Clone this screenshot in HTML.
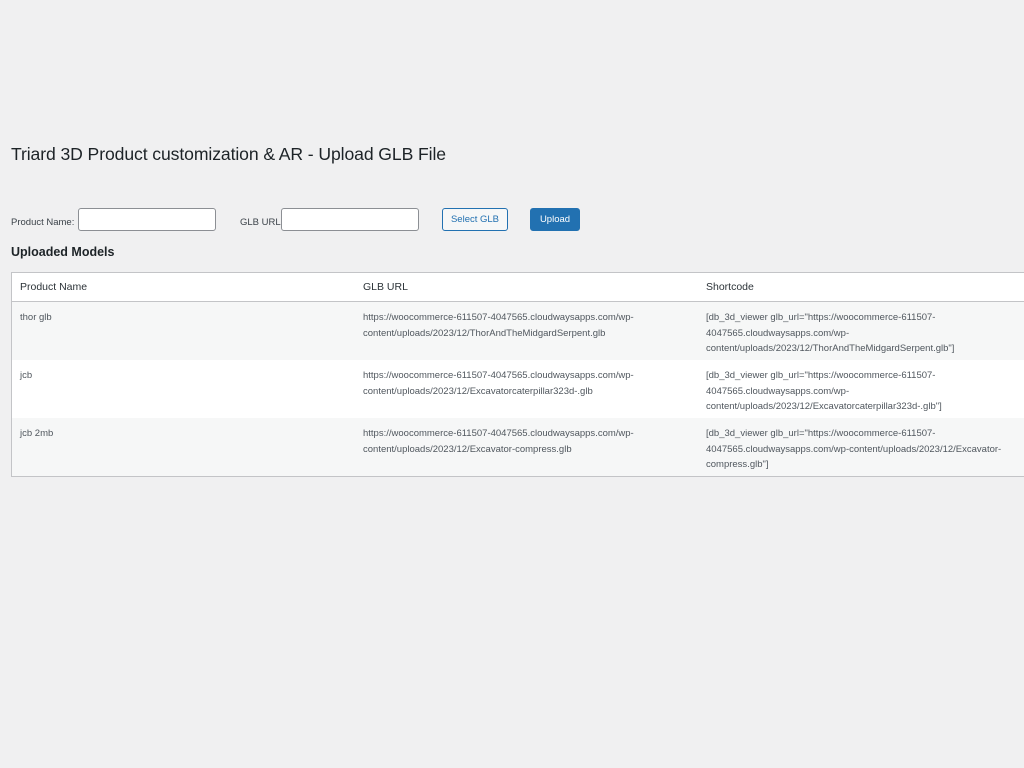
<!DOCTYPE html>
<html><head><style>
body{margin:0;width:1024px;height:768px;background:#f0f0f1;font-family:"Liberation Sans",sans-serif;color:#3c434a;position:relative;overflow:hidden}
.a{position:absolute;white-space:nowrap}
h1{position:absolute;left:11px;top:144px;margin:0;font-weight:400;font-size:17.6px;color:#1d2327;letter-spacing:-0.1px}
.lbl{font-size:9.5px;color:#3c434a}
.in{position:absolute;height:23px;background:#fff;border:1px solid #8c8f94;border-radius:3px;box-sizing:border-box}
.btn{position:absolute;height:23px;border-radius:3px;box-sizing:border-box;font-size:9.5px;text-align:center;line-height:21px}
table{position:absolute;left:11px;top:272px;width:1030px;border-collapse:collapse;border:1px solid #c3c4c7;background:#fff;font-size:9.5px;color:#50575e}
th{text-align:left;font-weight:400;font-size:10.5px;color:#2c3338;height:28px;padding:0 8px;border-bottom:1px solid #c3c4c7}
td{vertical-align:top;padding:8px 8px 0;height:50px;line-height:15.5px}
tr.alt td{background:#f6f7f7}
</style></head><body>
<h1>Triard 3D Product customization &amp; AR - Upload GLB File</h1>
<div class="a lbl" style="left:11px;top:217px">Product Name:</div>
<div class="in" style="left:78px;top:208px;width:138px"></div>
<div class="a lbl" style="left:240px;top:217px">GLB URL:</div>
<div class="in" style="left:281px;top:208px;width:138px"></div>
<div class="btn" style="left:442px;top:208px;width:66px;border:1px solid #2271b1;color:#2271b1;background:#f6f7f7">Select GLB</div>
<div class="btn" style="left:530px;top:208px;width:50px;background:#2271b1;color:#fff;border:1px solid #2271b1">Upload</div>
<div class="a" style="left:11px;top:245px;font-size:12.5px;font-weight:700;color:#1d2327">Uploaded Models</div>
<table>
<tr><th style="width:327px">Product Name</th><th style="width:327px">GLB URL</th><th>Shortcode</th></tr>
<tr class="alt"><td>thor glb</td><td>https://woocommerce-611507-4047565.cloudwaysapps.com/wp-<br>content/uploads/2023/12/ThorAndTheMidgardSerpent.glb</td><td>[db_3d_viewer glb_url="https://woocommerce-611507-<br>4047565.cloudwaysapps.com/wp-<br>content/uploads/2023/12/ThorAndTheMidgardSerpent.glb"]</td></tr>
<tr><td>jcb</td><td>https://woocommerce-611507-4047565.cloudwaysapps.com/wp-<br>content/uploads/2023/12/Excavatorcaterpillar323d-.glb</td><td>[db_3d_viewer glb_url="https://woocommerce-611507-<br>4047565.cloudwaysapps.com/wp-<br>content/uploads/2023/12/Excavatorcaterpillar323d-.glb"]</td></tr>
<tr class="alt"><td>jcb 2mb</td><td>https://woocommerce-611507-4047565.cloudwaysapps.com/wp-<br>content/uploads/2023/12/Excavator-compress.glb</td><td>[db_3d_viewer glb_url="https://woocommerce-611507-<br>4047565.cloudwaysapps.com/wp-content/uploads/2023/12/Excavator-<br>compress.glb"]</td></tr>
</table>
</body></html>
